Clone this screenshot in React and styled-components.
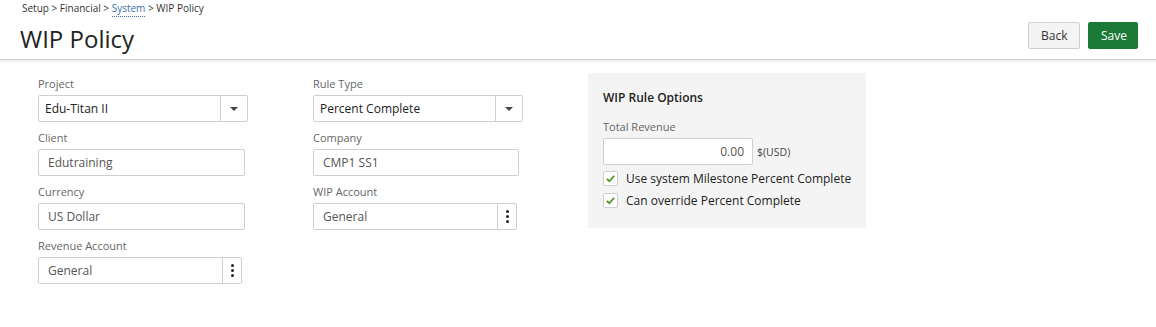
import React from 'react'
import styled, { createGlobalStyle } from 'styled-components'

const GlobalStyle = createGlobalStyle`
  body {
    margin: 0;
    background: #fff;
    font-family: "Open Sans", "Noto Sans", sans-serif;
    color: #333;
  }
`

const Page = styled.div`
  width: 1156px;
  height: 327px;
  overflow: hidden;
`

const Header = styled.div`
  display: flex;
  justify-content: space-between;
  align-items: flex-start;
  height: 60px;
  padding: 0 18px 0 20px;
  border-bottom: 1px solid #cfcfcf;
  box-sizing: border-box;
  position: relative;

  &::after {
    content: '';
    position: absolute;
    left: 0;
    right: 0;
    top: 60px;
    height: 4px;
    background: linear-gradient(#ececec, #fff);
  }
`

const TitleBlock = styled.div`
  display: flex;
  flex-direction: column;
`

const Crumbs = styled.div`
  font-size: 10px;
  line-height: 14px;
  margin-top: 1px;
  padding-left: 2px;
  color: #333;
`

const CrumbLink = styled.span`
  color: #3a6fb0;
  border-bottom: 1px dotted #3a6fb0;
  padding-bottom: 1px;
`

const Title = styled.h1`
  margin: 8px 0 0;
  font-size: 24px;
  font-weight: 400;
  line-height: 32px;
  color: #222;
`

const Actions = styled.div`
  display: flex;
  gap: 8px;
  margin-top: 22px;
`

const Button = styled.button`
  height: 27px;
  padding: 0 12px;
  font-family: inherit;
  font-size: 12px;
  border-radius: 2px;
  border: 1px solid ${p => (p.$primary ? '#1a7a35' : '#cfcfcf')};
  background: ${p => (p.$primary ? '#1a7a35' : '#f4f4f4')};
  color: ${p => (p.$primary ? '#fff' : '#333')};
  width: ${p => (p.$primary ? '50px' : '52px')};
`

const Body = styled.div`
  display: flex;
  padding: 17px 0 0 38px;
`

const Column = styled.div`
  display: flex;
  flex-direction: column;
  width: 275px;
`

const Field = styled.div`
  display: flex;
  flex-direction: column;
  margin-bottom: 9px;
`

const Label = styled.label`
  font-size: 11px;
  line-height: 14px;
  color: #666;
  margin-bottom: 4px;
`

const Box = styled.div`
  display: flex;
  align-items: center;
  width: ${p => p.$w}px;
  height: 27px;
  box-sizing: border-box;
  border: 1px solid #cfcfcf;
  border-radius: 2px;
  background: #fff;
`

const Value = styled.div`
  flex: 1;
  padding-left: ${p => (p.$muted ? '9px' : '6px')};
  font-size: 12px;
  color: ${p => (p.$muted ? '#555' : '#222')};
  text-align: ${p => (p.$right ? 'right' : 'left')};
  padding-right: ${p => (p.$right ? '8px' : '0')};
`

const Handle = styled.div`
  width: ${p => p.$w}px;
  align-self: stretch;
  border-left: 1px solid #cfcfcf;
  display: flex;
  align-items: center;
  justify-content: center;
`

const Caret = styled.div`
  width: 0;
  height: 0;
  border-left: 4px solid transparent;
  border-right: 4px solid transparent;
  border-top: 4px solid #444;
`

const Dots = styled.div`
  display: flex;
  flex-direction: column;
  gap: 2px;

  span {
    width: 3px;
    height: 3px;
    border-radius: 50%;
    background: #222;
  }
`

const Panel = styled.div`
  margin-top: -4px;
  width: 278px;
  height: 155px;
  box-sizing: border-box;
  background: #f4f4f4;
  padding: 17px 10px 0 15px;
  display: flex;
  flex-direction: column;
`

const PanelTitle = styled.div`
  font-size: 12px;
  font-weight: 600;
  color: #222;
  line-height: 16px;
  margin-bottom: 14px;
`

const InlineRow = styled.div`
  display: flex;
  align-items: center;
  gap: 4px;
  font-size: 10.5px;
  color: #444;
  margin-bottom: 2px;
`

const CheckRow = styled.div`
  display: flex;
  align-items: center;
  gap: 8px;
  height: 22px;
  font-size: 12px;
  color: #222;
  white-space: nowrap;
`

const Check = styled.div`
  width: 15px;
  height: 15px;
  flex: none;
  box-sizing: border-box;
  border: 1px solid #cfcfcf;
  border-radius: 2px;
  background: #fff;
  display: flex;
  align-items: center;
  justify-content: center;
`

const Tick = () => (
  <svg width="11" height="11" viewBox="0 0 12 12">
    <path d="M2 6.5 L4.8 9 L10 3" fill="none" stroke="#4f9a2a" strokeWidth="2" />
  </svg>
)

const SelectBox = ({ w, value }) => (
  <Box $w={w}>
    <Value>{value}</Value>
    <Handle $w={26}><Caret /></Handle>
  </Box>
)

const LookupBox = ({ w, value }) => (
  <Box $w={w}>
    <Value $muted>{value}</Value>
    <Handle $w={18}>
      <Dots><span /><span /><span /></Dots>
    </Handle>
  </Box>
)

const TextBox = ({ w, value }) => (
  <Box $w={w}>
    <Value $muted>{value}</Value>
  </Box>
)

export default function App() {
  return (
    <Page>
      <GlobalStyle />
      <Header>
        <TitleBlock>
          <Crumbs>
            Setup &gt; Financial &gt; <CrumbLink>System</CrumbLink> &gt; WIP Policy
          </Crumbs>
          <Title>WIP Policy</Title>
        </TitleBlock>
        <Actions>
          <Button>Back</Button>
          <Button $primary>Save</Button>
        </Actions>
      </Header>
      <Body>
        <Column>
          <Field>
            <Label>Project</Label>
            <SelectBox w={210} value="Edu-Titan II" />
          </Field>
          <Field>
            <Label>Client</Label>
            <TextBox w={207} value="Edutraining" />
          </Field>
          <Field>
            <Label>Currency</Label>
            <TextBox w={207} value="US Dollar" />
          </Field>
          <Field>
            <Label>Revenue Account</Label>
            <LookupBox w={204} value="General" />
          </Field>
        </Column>
        <Column>
          <Field>
            <Label>Rule Type</Label>
            <SelectBox w={210} value="Percent Complete" />
          </Field>
          <Field>
            <Label>Company</Label>
            <TextBox w={206} value="CMP1 SS1" />
          </Field>
          <Field>
            <Label>WIP Account</Label>
            <LookupBox w={204} value="General" />
          </Field>
        </Column>
        <Panel>
          <PanelTitle>WIP Rule Options</PanelTitle>
          <Label>Total Revenue</Label>
          <InlineRow>
            <Box $w={150}>
              <Value $muted $right>0.00</Value>
            </Box>
            $(USD)
          </InlineRow>
          <CheckRow>
            <Check><Tick /></Check>
            Use system Milestone Percent Complete
          </CheckRow>
          <CheckRow>
            <Check><Tick /></Check>
            Can override Percent Complete
          </CheckRow>
        </Panel>
      </Body>
    </Page>
  )
}
